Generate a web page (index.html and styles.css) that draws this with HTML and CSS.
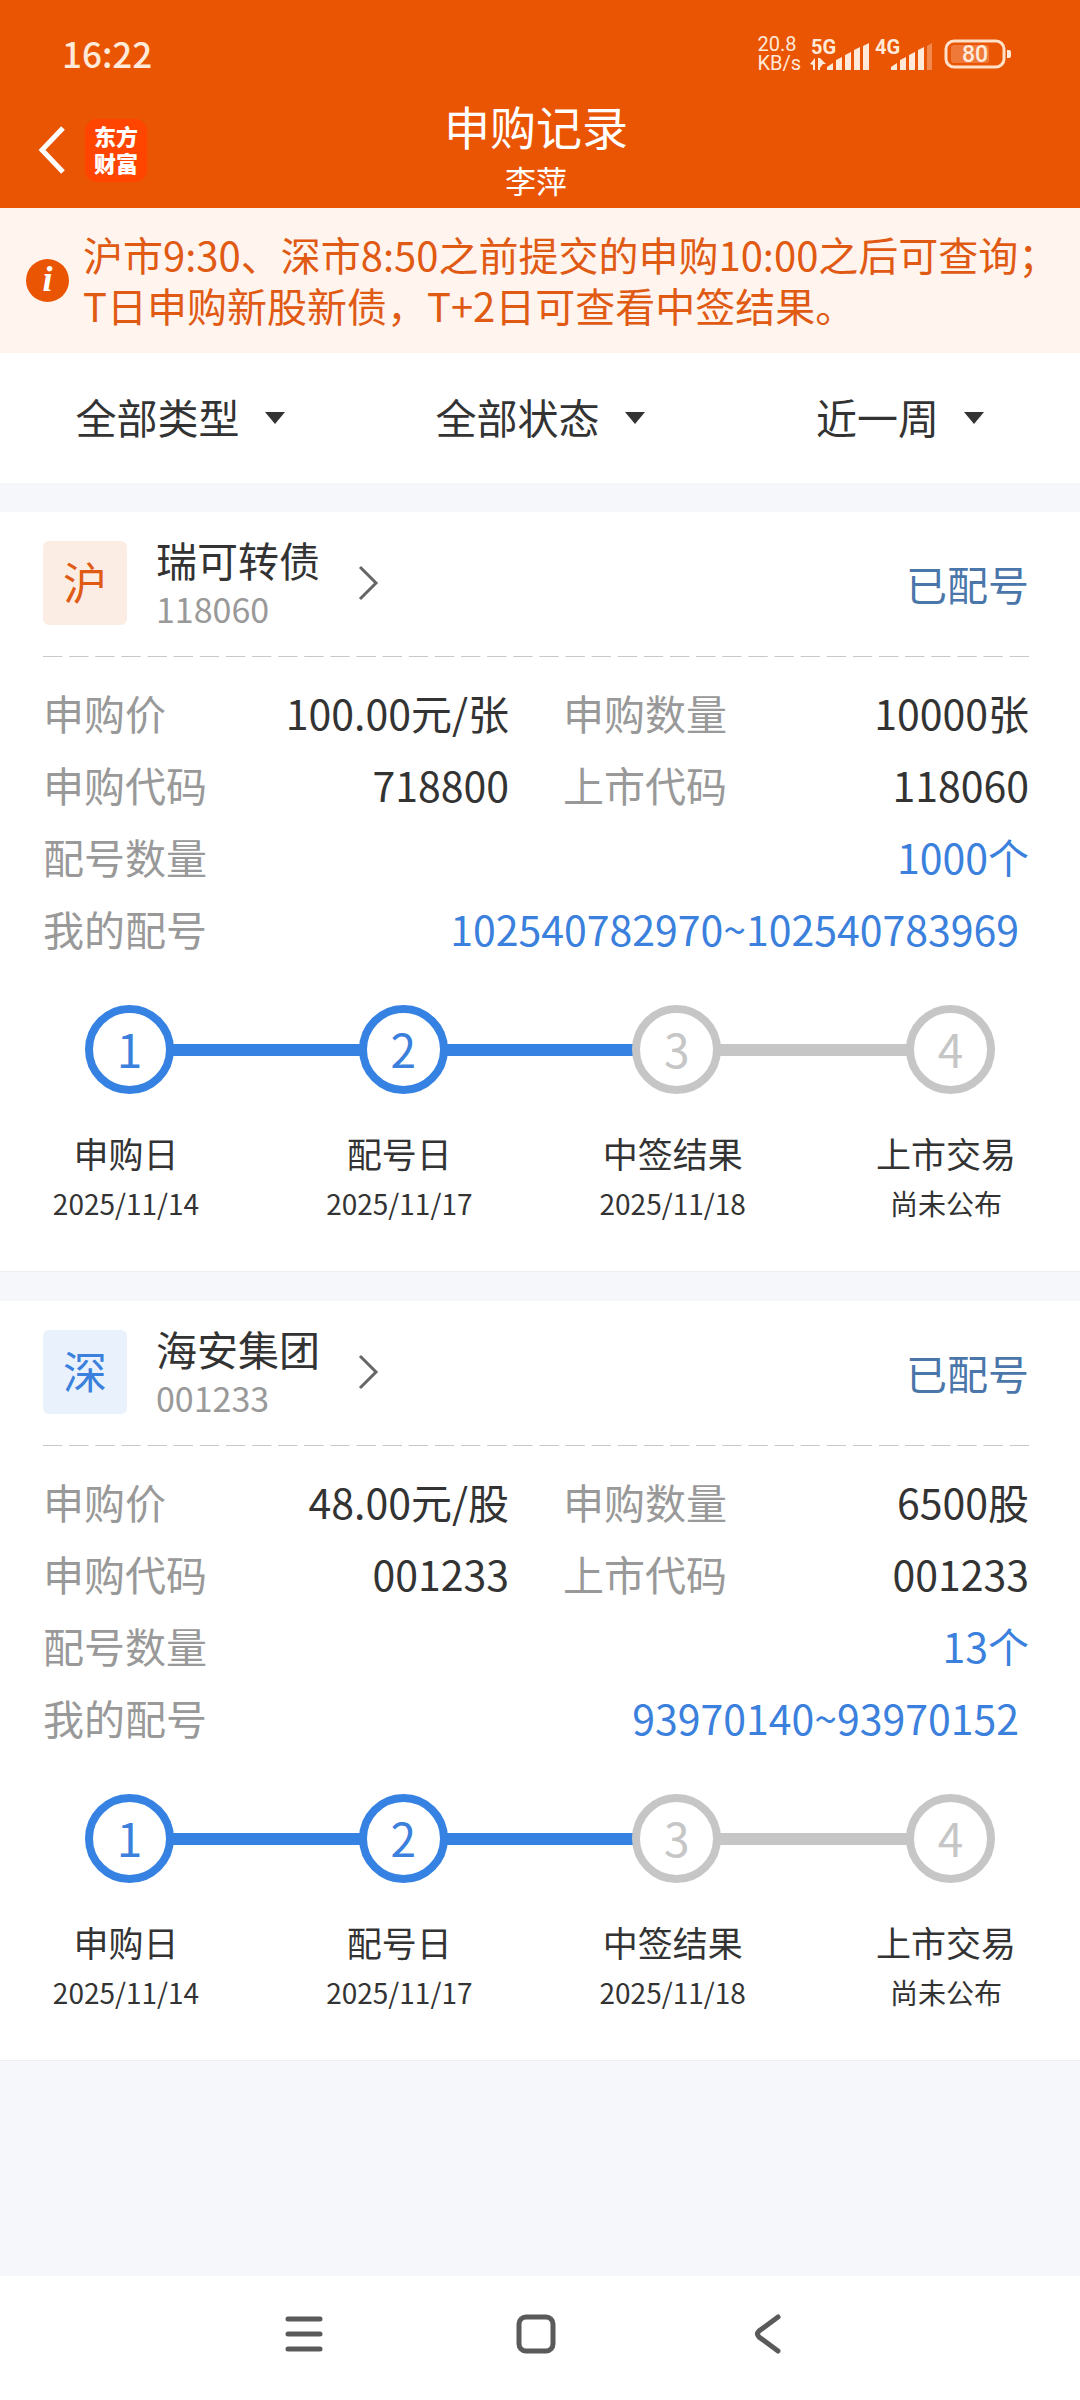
FILE: index.html
```html
<!DOCTYPE html>
<html lang="zh-CN">
<head>
    <meta charset="UTF-8">
    <meta name="viewport" content="width=device-width, initial-scale=1.0">
    <title>申购记录</title>
    <link rel="stylesheet" href="styles.css">
</head>
<body>
    <header class="header">
        <div class="status-bar">
            <span class="time">16:22</span>
            <div class="status-icons">
                <span class="speed">20.8<br>KB/s</span>
                <svg class="signal" width="60" height="40" viewBox="0 -3 60 40">
                    <text x="1" y="17">5G</text>
                    <path d="M0 27l5-6v12h-2v-5zM8 21h2l6 6h-3l-3 4v2h-2z"/>
                    <path d="M17 33v-3l6-4v7zM26 33V23l6-3v13zM35 33V18l6-3v18zM44 33V13l6-3v23zM53 33V9l6-3v27z"/>
                </svg>
                <svg class="signal" width="60" height="40" viewBox="0 -3 60 40">
                    <text x="0" y="17">4G</text>
                    <path d="M16 33v-3l6-4v7zM25 33V23l6-3v13zM34 33V18l6-3v18zM43 33V13l6-3v23z"/>
                    <path class="off" d="M52 33V9l5-3v27z"/>
                </svg>
                <svg class="battery" width="68" height="30" viewBox="0 0 68 30">
                    <rect class="shell" x="2" y="2" width="58" height="26" rx="8"/>
                    <rect class="level" x="7" y="6" width="38" height="18" rx="3"/>
                    <path d="M63 11h2q2 0 2 2v4q0 2-2 2h-2z"/>
                    <text x="31" y="23" text-anchor="middle">80</text>
                </svg>
            </div>
        </div>
        <div class="title-bar">
            <div class="title-left">
                <button class="back" aria-label="返回">
                    <svg width="28" height="50" viewBox="0 0 28 50"><path d="M25 3L4 25l21 22"/></svg>
                </button>
                <a class="logo" href="#">东方<br>财富</a>
            </div>
            <div class="title-center">
                <h1>申购记录</h1>
                <p>李萍</p>
            </div>
        </div>
    </header>

    <div class="notice">
        <span class="notice-icon">i</span>
        <p>沪市9:30、深市8:50之前提交的申购10:00之后可查询；<br>T日申购新股新债，T+2日可查看中签结果。</p>
    </div>

    <div class="filters">
        <div class="filter">
            <select aria-label="类型"><option>全部类型</option></select>
        </div>
        <div class="filter">
            <select aria-label="状态"><option>全部状态</option></select>
        </div>
        <div class="filter">
            <select aria-label="时间"><option>近一周</option></select>
        </div>
    </div>

    <main class="list">
        <section class="card">
            <div class="card-head">
                <span class="tag tag-sh">沪</span>
                <a class="stock" href="#">
                    <span class="stock-text">
                        <span class="stock-name">瑞可转债</span>
                        <span class="stock-code">118060</span>
                    </span>
                    <svg class="arrow" width="22" height="36" viewBox="0 0 22 36"><path d="M2 2l16 16L2 34"/></svg>
                </a>
                <span class="state">已配号</span>
            </div>
            <dl class="info">
                <div class="field"><dt>申购价</dt><dd>100.00元/张</dd></div>
                <div class="field"><dt>申购数量</dt><dd>10000张</dd></div>
                <div class="field"><dt>申购代码</dt><dd>718800</dd></div>
                <div class="field"><dt>上市代码</dt><dd>118060</dd></div>
                <div class="field wide"><dt>配号数量</dt><dd>1000个</dd></div>
                <div class="field wide number"><dt>我的配号</dt><dd>102540782970~102540783969</dd></div>
            </dl>
            <div class="track">
                <span class="dot done">1</span>
                <span class="line done"></span>
                <span class="dot done">2</span>
                <span class="line done"></span>
                <span class="dot">3</span>
                <span class="line"></span>
                <span class="dot">4</span>
            </div>
            <ol class="steps">
                <li>申购日<small>2025/11/14</small></li>
                <li>配号日<small>2025/11/17</small></li>
                <li>中签结果<small>2025/11/18</small></li>
                <li>上市交易<small>尚未公布</small></li>
            </ol>
        </section>

        <section class="card">
            <div class="card-head">
                <span class="tag tag-sz">深</span>
                <a class="stock" href="#">
                    <span class="stock-text">
                        <span class="stock-name">海安集团</span>
                        <span class="stock-code">001233</span>
                    </span>
                    <svg class="arrow" width="22" height="36" viewBox="0 0 22 36"><path d="M2 2l16 16L2 34"/></svg>
                </a>
                <span class="state">已配号</span>
            </div>
            <dl class="info">
                <div class="field"><dt>申购价</dt><dd>48.00元/股</dd></div>
                <div class="field"><dt>申购数量</dt><dd>6500股</dd></div>
                <div class="field"><dt>申购代码</dt><dd>001233</dd></div>
                <div class="field"><dt>上市代码</dt><dd>001233</dd></div>
                <div class="field wide"><dt>配号数量</dt><dd>13个</dd></div>
                <div class="field wide number"><dt>我的配号</dt><dd>93970140~93970152</dd></div>
            </dl>
            <div class="track">
                <span class="dot done">1</span>
                <span class="line done"></span>
                <span class="dot done">2</span>
                <span class="line done"></span>
                <span class="dot">3</span>
                <span class="line"></span>
                <span class="dot">4</span>
            </div>
            <ol class="steps">
                <li>申购日<small>2025/11/14</small></li>
                <li>配号日<small>2025/11/17</small></li>
                <li>中签结果<small>2025/11/18</small></li>
                <li>上市交易<small>尚未公布</small></li>
            </ol>
        </section>
    </main>

    <nav class="nav-bar">
        <button aria-label="菜单">
            <svg width="40" height="40" viewBox="0 0 40 40"><path d="M4 5h32M4 20h32M4 35h32"/></svg>
        </button>
        <button aria-label="主页">
            <svg width="40" height="40" viewBox="0 0 40 40"><rect x="3" y="3" width="34" height="34" rx="7"/></svg>
        </button>
        <button aria-label="后退">
            <svg width="40" height="40" viewBox="0 0 40 40"><path d="M30 3L11 17q-3 3 0 6l19 14"/></svg>
        </button>
    </nav>
</body>
</html>
```
FILE: styles.css
```css
* {
    box-sizing: border-box;
}
body {
    margin: 0;
    min-height: 100vh;
    display: flex;
    flex-direction: column;
    background-color: #f6f7fa;
    color: #333;
    font-family: "Noto Sans CJK SC", sans-serif;
    font-size: 41px;
}
h1, p, dl, dd, ol {
    margin: 0;
    padding: 0;
}
button {
    padding: 0;
    border: none;
    background: none;
    cursor: pointer;
}
a {
    color: inherit;
    text-decoration: none;
}
svg {
    display: block;
    fill: none;
}

/* header */
.header {
    background-color: #ea5504;
    color: #fff;
}
.status-bar {
    display: flex;
    justify-content: space-between;
    align-items: center;
    height: 95px;
    padding: 12px 68px 0 62px;
    color: #ffe9d8;
}
.time {
    padding-bottom: 2px;
    font-size: 35px;
    font-weight: 500;
    line-height: 40px;
}
.status-icons {
    display: flex;
    align-items: center;
}
.speed {
    margin-right: 9px;
    font-family: Roboto, sans-serif;
    font-size: 20px;
    line-height: 19px;
}
.signal {
    margin-right: 5px;
    fill: #ffe9d8;
    font-family: Roboto, sans-serif;
    font-size: 20px;
    font-weight: 700;
}
.signal .off {
    opacity: 0.35;
}
.battery {
    margin-left: 4px;
    fill: #ffe9d8;
    font-family: Roboto, sans-serif;
    font-size: 23px;
    font-weight: 500;
}
.battery .shell {
    fill: none;
    stroke: #ffe0c8;
    stroke-width: 3;
}
.battery .level {
    opacity: 0.25;
}
.title-bar {
    display: grid;
    grid-template-columns: 1fr auto 1fr;
    align-items: center;
    padding-right: 8px;
}
.title-left {
    display: flex;
    align-items: center;
    gap: 19px;
    padding: 0 0 3px 38px;
}
.back path {
    stroke: #fff;
    stroke-width: 5;
}
.logo {
    width: 62px;
    height: 63px;
    padding-top: 3px;
    border-radius: 12px;
    background-color: #ff4500;
    font-size: 22px;
    font-weight: 900;
    line-height: 27px;
    text-align: center;
}
.title-center {
    padding-bottom: 3px;
    text-align: center;
}
.title-center h1 {
    font-size: 46px;
    font-weight: 400;
    line-height: 60px;
}
.title-center p {
    font-size: 31px;
    line-height: 50px;
}

/* notice */
.notice {
    display: flex;
    align-items: center;
    gap: 14px;
    padding: 21px 0 22px 26px;
    background-color: #fff4ee;
    color: #e05a14;
    font-size: 40px;
    line-height: 51px;
    white-space: nowrap;
}
.notice-icon {
    width: 43px;
    height: 43px;
    border-radius: 50%;
    background-color: #ea5504;
    color: #fff;
    font: italic bold 36px/41px "Liberation Serif", serif;
    text-align: center;
}

/* filters */
.filters {
    display: grid;
    grid-template-columns: repeat(3, 1fr);
    margin-bottom: 29px;
    background-color: #fff;
}
.filter {
    display: flex;
    justify-content: center;
    align-items: center;
    height: 130px;
}
.filter::after {
    content: "";
    margin-left: -20px;
    border: 10px solid transparent;
    border-top: 12px solid #333;
    border-bottom: none;
    pointer-events: none;
}
.filter select {
    padding: 0 45px 4px 0;
    border: none;
    background: none;
    color: #333;
    font: inherit;
    line-height: 60px;
    appearance: none;
}

/* cards */
.list {
    display: flex;
    flex-direction: column;
    gap: 29px;
}
.card {
    padding-bottom: 43px;
    border-bottom: 1px solid #eee;
    background-color: #fff;
}
.card-head {
    display: flex;
    align-items: center;
    height: 145px;
    margin: 0 44px 0 43px;
    padding: 0 7px 3px 0;
    background: linear-gradient(to right, #c8c8c8 19px, transparent 19px) 0 100% / 26px 1px round no-repeat;
    background-repeat: round no-repeat;
}
.tag {
    width: 84px;
    height: 84px;
    border-radius: 6px;
    font-size: 44px;
    line-height: 80px;
    text-align: center;
}
.tag-sh {
    background-color: #fcede4;
    color: #e05a14;
}
.tag-sz {
    background-color: #e9f2fc;
    color: #3a80dc;
}
.stock {
    display: flex;
    align-items: center;
    gap: 38px;
    margin-left: 29px;
}
.stock-text {
    display: flex;
    flex-direction: column;
}
.stock-name {
    line-height: 52px;
}
.stock-code {
    color: #999;
    font-size: 34px;
    line-height: 48px;
}
.arrow path {
    stroke: #666;
    stroke-width: 3;
}
.state {
    margin-left: auto;
    color: #4a76aa;
}
.info {
    display: grid;
    grid-template-columns: 1fr 1fr;
    column-gap: 54px;
    margin: 0 51px 0 43px;
    padding: 19px 0 41px;
    line-height: 72px;
}
.field {
    display: flex;
    justify-content: space-between;
}
.field dt {
    color: #999;
}
.wide {
    grid-column: 1 / 3;
}
.wide dd {
    color: #3a80dc;
}
.number dd {
    padding-right: 10px;
}

/* progress */
.track {
    display: flex;
    align-items: center;
    padding: 0 85px;
}
.dot {
    width: 89px;
    height: 89px;
    border: 8px solid #c6c6c6;
    border-radius: 50%;
    color: #c6c6c6;
    font-size: 46px;
    line-height: 70px;
    text-align: center;
}
.line {
    flex: 1;
    height: 12px;
    margin: 0 -1px;
    background-color: #c6c6c6;
}
.dot.done {
    border-color: #3682e3;
    color: #3a80dc;
}
.line.done {
    background-color: #3682e3;
}
.steps {
    display: flex;
    justify-content: space-between;
    padding: 34px 47px 0 39px;
    list-style: none;
    font-size: 35px;
    line-height: 50px;
    text-align: center;
}
.steps li {
    width: 174px;
}
.steps small {
    display: block;
    font-size: 28px;
}

/* system navigation */
.nav-bar {
    display: flex;
    justify-content: center;
    margin-top: auto;
    padding: 0 8px 8px 0;
    background-color: #fff;
}
.nav-bar button {
    display: flex;
    justify-content: center;
    align-items: center;
    width: 232px;
    height: 116px;
}
.nav-bar svg {
    stroke: #5a5a5a;
    stroke-width: 5;
    stroke-linecap: round;
}
```
